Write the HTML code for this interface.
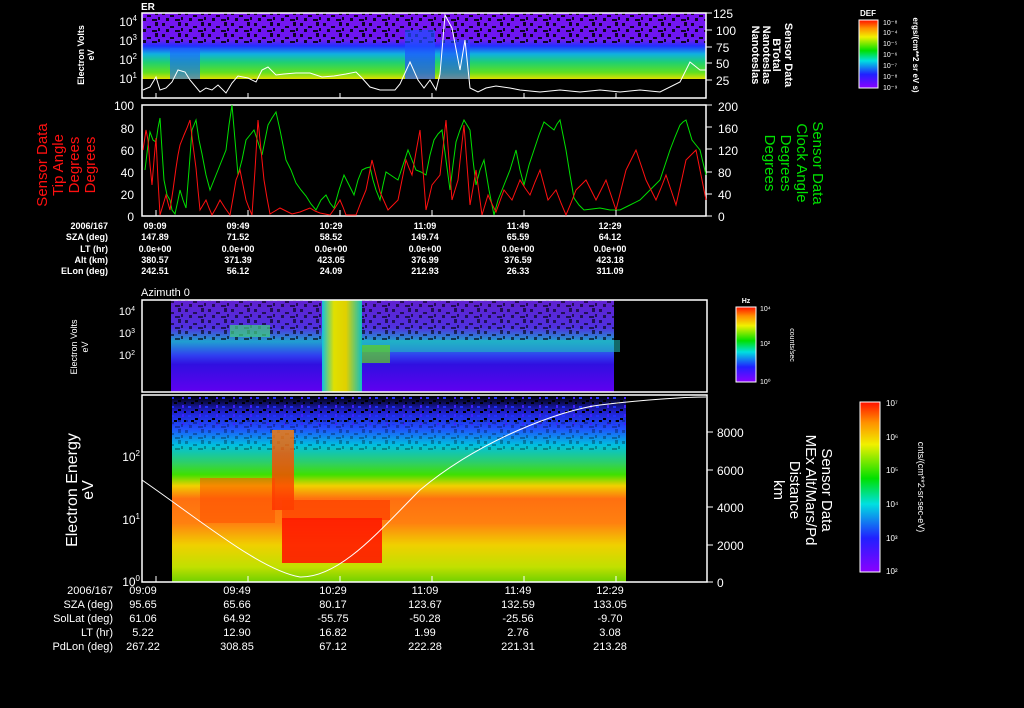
<!DOCTYPE html>
<html><head><meta charset="utf-8"><style>
html,body{margin:0;padding:0;background:#000;}
body{width:1024px;height:708px;position:relative;overflow:hidden;font-family:"Liberation Sans",sans-serif;color:#fff;}
svg{position:absolute;left:0;top:0}
</style></head><body>
<svg width="1024" height="708" viewBox="0 0 1024 708" font-family="Liberation Sans, sans-serif">
<defs>
<linearGradient id="rb" x1="0" y1="1" x2="0" y2="0">
<stop offset="0" stop-color="#8a00ff"/><stop offset="0.2" stop-color="#2020ff"/><stop offset="0.4" stop-color="#00e0e0"/><stop offset="0.55" stop-color="#00e000"/><stop offset="0.75" stop-color="#f0f000"/><stop offset="0.88" stop-color="#ff9000"/><stop offset="1" stop-color="#ff1000"/>
</linearGradient>
<linearGradient id="p1" x1="0" y1="0" x2="0" y2="1">
<stop offset="0" stop-color="#7a10f0"/><stop offset="0.42" stop-color="#6a20f0"/><stop offset="0.5" stop-color="#2030ff"/><stop offset="0.62" stop-color="#10b0e0"/><stop offset="0.75" stop-color="#20d070"/><stop offset="0.9" stop-color="#60e020"/><stop offset="1" stop-color="#e0e000"/>
</linearGradient>
<linearGradient id="p4" x1="0" y1="0" x2="0" y2="1">
<stop offset="0" stop-color="#000010"/><stop offset="0.08" stop-color="#2020d0"/><stop offset="0.17" stop-color="#2050ff"/><stop offset="0.26" stop-color="#00c0e0"/><stop offset="0.36" stop-color="#30d060"/><stop offset="0.42" stop-color="#40e000"/><stop offset="0.48" stop-color="#f0d000"/><stop offset="0.55" stop-color="#ff7010"/><stop offset="0.68" stop-color="#ff8010"/><stop offset="0.8" stop-color="#f0d000"/><stop offset="0.92" stop-color="#c0e000"/><stop offset="1" stop-color="#70d000"/>
</linearGradient>
<linearGradient id="p3" x1="0" y1="0" x2="0" y2="1">
<stop offset="0" stop-color="#6020d0"/><stop offset="0.3" stop-color="#5030e0"/><stop offset="0.45" stop-color="#20a0d0"/><stop offset="0.6" stop-color="#3040f0"/><stop offset="0.7" stop-color="#3010e0"/><stop offset="1" stop-color="#6000f0"/>
</linearGradient>
<linearGradient id="gb" x1="0" y1="0" x2="1" y2="0">
<stop offset="0" stop-color="#10c0e0"/><stop offset="0.3" stop-color="#e0e000"/><stop offset="0.6" stop-color="#e0d000"/><stop offset="1" stop-color="#10c0c0"/>
</linearGradient>
<linearGradient id="sp" x1="0" y1="0" x2="0" y2="1">
<stop offset="0" stop-color="#ff8000"/><stop offset="0.3" stop-color="#ff5000"/><stop offset="1" stop-color="#ff3000"/>
</linearGradient>
<pattern id="spk" width="23" height="11" patternUnits="userSpaceOnUse">
<rect x="1" y="1" width="3" height="3" fill="#000"/><rect x="9" y="4" width="4" height="2" fill="#000"/><rect x="17" y="0" width="3" height="4" fill="#000"/><rect x="5" y="7" width="3" height="3" fill="#000"/><rect x="14" y="8" width="5" height="2" fill="#000"/><rect x="20" y="6" width="2" height="3" fill="#000"/>
</pattern>
<pattern id="spkb" width="17" height="9" patternUnits="userSpaceOnUse">
<rect x="1" y="1" width="3" height="2" fill="#2030ff"/><rect x="8" y="4" width="3" height="2" fill="#000"/><rect x="12" y="0" width="2" height="3" fill="#4020ff"/><rect x="4" y="6" width="3" height="2" fill="#000"/><rect x="14" y="6" width="2" height="2" fill="#000"/>
</pattern>
</defs>

<!-- Panel 1 -->
<rect x="142" y="13" width="564" height="66" fill="url(#p1)"/>
<rect x="142" y="30" width="564" height="8" fill="#7010f0" opacity="0.6"/>
<rect x="142" y="13" width="564" height="30" fill="url(#spk)" opacity="0.85"/>
<rect x="170" y="48" width="30" height="31" fill="#2060ff" opacity="0.6"/>
<rect x="405" y="30" width="30" height="49" fill="#2050ff" opacity="0.7"/>
<rect x="440" y="40" width="30" height="39" fill="#2050ff" opacity="0.6"/>
<rect x="142" y="13" width="564" height="85" fill="none" stroke="#fff" stroke-width="1.5"/>
<polyline fill="none" stroke="#fff" stroke-width="1" points="143,90 150,87 156,77 160,90 166,88 172,82 178,70 185,72 190,80 200,92 206,88 212,90 218,85 226,93 232,83 238,76 248,78 256,82 262,70 268,67 276,75 284,74 296,73 310,73 322,77 334,76 346,74 356,72 362,78 370,87 380,90 395,90 400,84 410,62 418,80 424,88 430,80 436,90 440,74 445,15 452,28 460,70 465,40 470,88 478,92 486,88 496,86 510,88 520,90 540,92 560,90 580,92 600,90 620,92 640,90 660,92 680,82 690,62 700,70 706,70"/>
<text x="141" y="10" font-size="10" font-weight="bold" fill="#fff">ER</text>

<!-- Panel 2 -->
<rect x="142" y="105" width="564" height="111" fill="none" stroke="#fff" stroke-width="1.5"/>
<polyline fill="none" stroke="#00e000" stroke-width="1" points="145,170 148,145 150,132 153,140 156,142 158,128 160,118 162,150 164,180 167,195 170,200 172,210 175,214 178,200 180,190 183,200 186,208 189,170 192,130 196,120 199,140 202,154 206,175 210,190 214,180 218,170 222,160 226,150 229,125 232,105 235,140 238,175 242,160 246,140 250,135 254,130 258,142 262,155 265,140 268,125 272,118 276,112 280,130 286,160 291,170 296,183 301,190 306,196 311,204 316,210 321,200 326,195 330,203 334,208 339,190 344,175 349,185 354,195 358,180 362,170 366,168 370,167 373,180 376,190 380,200 383,185 386,172 392,176 398,180 403,165 408,150 412,160 416,170 421,172 426,175 430,155 434,140 438,134 442,130 446,160 450,190 453,165 456,142 460,130 464,120 467,125 470,130 473,160 476,185 480,170 484,160 489,190 494,215 498,200 502,190 506,180 510,170 513,160 516,150 520,170 524,185 529,165 534,150 539,135 544,122 549,126 554,130 557,124 560,120 563,135 566,150 570,175 574,198 579,205 584,210 592,209 600,208 610,210 620,210 630,205 640,200 650,190 660,180 665,165 670,150 675,137 680,125 683,122 686,120 689,130 692,140 696,145 700,150 706,175"/>
<polyline fill="none" stroke="#ff1010" stroke-width="1" points="143,150 146,130 148,140 150,165 152,185 154,160 156,138 158,180 160,215 163,205 166,195 168,203 170,210 173,190 176,168 178,155 180,145 182,140 184,135 187,128 190,120 193,145 196,168 198,190 200,210 203,205 206,200 209,208 212,215 216,208 220,200 225,208 230,215 233,198 236,180 238,175 240,170 243,185 246,200 249,208 252,215 255,170 258,120 261,150 264,180 267,198 270,214 275,211 280,208 286,211 292,214 296,213 300,212 305,210 310,208 315,211 320,213 325,214 330,215 335,208 340,200 343,207 346,215 351,215 356,215 361,202 366,190 369,175 372,160 376,176 380,192 384,201 388,210 393,205 398,200 402,180 406,160 409,168 412,175 416,152 420,130 423,170 426,210 429,198 432,185 436,180 440,175 443,148 446,120 449,160 452,200 455,190 458,180 461,152 464,125 467,165 470,205 473,188 476,170 479,193 482,215 485,205 488,195 492,204 496,212 500,201 504,190 508,195 512,200 516,190 520,180 525,188 530,195 535,182 540,170 544,185 548,200 552,195 556,190 561,203 566,215 571,203 576,190 581,185 586,180 591,190 596,200 601,190 606,180 611,195 616,210 621,190 626,170 631,160 636,150 641,165 646,180 651,190 656,200 661,188 666,175 671,190 676,205 681,183 686,160 691,155 696,150 701,175 706,200"/>

<!-- Panel 3 -->
<rect x="171" y="300" width="443" height="92" fill="url(#p3)"/>
<rect x="171" y="300" width="443" height="40" fill="url(#spk)" opacity="0.6"/>
<rect x="230" y="325" width="40" height="12" fill="#40d080" opacity="0.7"/>
<rect x="360" y="340" width="260" height="12" fill="#20c0c0" opacity="0.55"/>
<rect x="360" y="345" width="30" height="18" fill="#60d020" opacity="0.7"/>
<rect x="322" y="300" width="40" height="92" fill="url(#gb)"/>
<rect x="142" y="300" width="565" height="92" fill="none" stroke="#fff" stroke-width="1.5"/>
<text x="141" y="296" font-size="11" fill="#fff">Azimuth 0</text>

<!-- Panel 4 -->
<rect x="172" y="397" width="454" height="185" fill="url(#p4)"/>
<rect x="172" y="397" width="454" height="28" fill="url(#spkb)"/>
<rect x="172" y="420" width="454" height="30" fill="url(#spk)" opacity="0.3"/>
<rect x="200" y="478" width="75" height="45" fill="#ff5000" opacity="0.55"/>
<rect x="272" y="430" width="22" height="80" fill="url(#sp)" opacity="0.8"/>
<rect x="282" y="500" width="108" height="20" fill="#ff4000" opacity="0.75"/>
<rect x="282" y="518" width="100" height="45" fill="#ff1a00" opacity="0.9"/>
<rect x="142" y="395" width="565" height="187" fill="none" stroke="#fff" stroke-width="1.5"/>
<path fill="none" stroke="#fff" stroke-width="1" d="M142,480 C200,520 260,570 300,577 C340,578 380,530 420,490 C480,440 560,410 600,405 C650,399 690,397 706,397"/>

<!-- ticks -->
<g stroke="#fff" stroke-width="1">
<line x1="156" y1="98" x2="156" y2="93"/><line x1="248" y1="98" x2="248" y2="93"/><line x1="340" y1="98" x2="340" y2="93"/><line x1="432" y1="98" x2="432" y2="93"/><line x1="524" y1="98" x2="524" y2="93"/><line x1="616" y1="98" x2="616" y2="93"/>
<line x1="156" y1="216" x2="156" y2="210"/><line x1="248" y1="216" x2="248" y2="210"/><line x1="340" y1="216" x2="340" y2="210"/><line x1="432" y1="216" x2="432" y2="210"/><line x1="524" y1="216" x2="524" y2="210"/><line x1="616" y1="216" x2="616" y2="210"/>
<line x1="156" y1="582" x2="156" y2="576"/><line x1="248" y1="582" x2="248" y2="576"/><line x1="340" y1="582" x2="340" y2="576"/><line x1="432" y1="582" x2="432" y2="576"/><line x1="524" y1="582" x2="524" y2="576"/><line x1="616" y1="582" x2="616" y2="576"/>
<line x1="706" y1="13" x2="712" y2="13"/><line x1="706" y1="30" x2="712" y2="30"/><line x1="706" y1="47" x2="712" y2="47"/><line x1="706" y1="63" x2="712" y2="63"/><line x1="706" y1="80" x2="712" y2="80"/>
<line x1="706" y1="105" x2="712" y2="105"/><line x1="706" y1="127" x2="712" y2="127"/><line x1="706" y1="149" x2="712" y2="149"/><line x1="706" y1="172" x2="712" y2="172"/><line x1="706" y1="194" x2="712" y2="194"/><line x1="706" y1="216" x2="712" y2="216"/>
<line x1="707" y1="432" x2="713" y2="432"/><line x1="707" y1="470" x2="713" y2="470"/><line x1="707" y1="507" x2="713" y2="507"/><line x1="707" y1="545" x2="713" y2="545"/><line x1="707" y1="582" x2="713" y2="582"/>
</g>

<g font-size="12" fill="#fff">
<text x="137" y="26" text-anchor="end">10<tspan font-size="8" dy="-5">4</tspan></text>
<text x="137" y="45" text-anchor="end">10<tspan font-size="8" dy="-5">3</tspan></text>
<text x="137" y="64" text-anchor="end">10<tspan font-size="8" dy="-5">2</tspan></text>
<text x="137" y="83" text-anchor="end">10<tspan font-size="8" dy="-5">1</tspan></text>
<text x="713" y="18">125</text><text x="716" y="35">100</text><text x="716" y="52">75</text><text x="716" y="68">50</text><text x="716" y="85">25</text>
<text x="134" y="110" text-anchor="end">100</text><text x="134" y="133" text-anchor="end">80</text><text x="134" y="155" text-anchor="end">60</text><text x="134" y="177" text-anchor="end">40</text><text x="134" y="199" text-anchor="end">20</text><text x="134" y="221" text-anchor="end">0</text>
<text x="718" y="111">200</text><text x="718" y="133">160</text><text x="718" y="155">120</text><text x="718" y="177">80</text><text x="718" y="199">40</text><text x="718" y="221">0</text>
<text x="140" y="461" text-anchor="end">10<tspan font-size="8" dy="-5">2</tspan></text>
<text x="140" y="524" text-anchor="end">10<tspan font-size="8" dy="-5">1</tspan></text>
<text x="140" y="586" text-anchor="end">10<tspan font-size="8" dy="-5">0</tspan></text>
<text x="717" y="437">8000</text><text x="717" y="475">6000</text><text x="717" y="512">4000</text><text x="717" y="550">2000</text><text x="717" y="587">0</text>
</g>
<g font-size="11" fill="#fff">
<text x="135" y="315" text-anchor="end">10<tspan font-size="7" dy="-4">4</tspan></text>
<text x="135" y="337" text-anchor="end">10<tspan font-size="7" dy="-4">3</tspan></text>
<text x="135" y="359" text-anchor="end">10<tspan font-size="7" dy="-4">2</tspan></text>
</g>

<!-- axis titles -->
<text transform="translate(84,55) rotate(-90)" font-size="9" font-weight="bold" text-anchor="middle" fill="#fff">Electron Volts</text>
<text transform="translate(94,55) rotate(-90)" font-size="9" font-weight="bold" text-anchor="middle" fill="#fff">eV</text>
<g fill="#ff1010" font-size="15" text-anchor="middle">
<text transform="translate(47,165) rotate(-90)">Sensor Data</text>
<text transform="translate(63,165) rotate(-90)">Tip Angle</text>
<text transform="translate(79,165) rotate(-90)">Degrees</text>
<text transform="translate(95,165) rotate(-90)">Degrees</text>
</g>
<g fill="#00e000" font-size="15" text-anchor="middle">
<text transform="translate(813,163) rotate(90)">Sensor Data</text>
<text transform="translate(797,163) rotate(90)">Clock Angle</text>
<text transform="translate(781,163) rotate(90)">Degrees</text>
<text transform="translate(765,163) rotate(90)">Degrees</text>
</g>
<g fill="#fff" font-size="11" font-weight="bold" text-anchor="middle">
<text transform="translate(785,55) rotate(90)">Sensor Data</text>
<text transform="translate(773,55) rotate(90)">BTotal</text>
<text transform="translate(763,55) rotate(90)">Nanoteslas</text>
<text transform="translate(752,55) rotate(90)">Nanoteslas</text>
</g>
<text transform="translate(77,347) rotate(-90)" font-size="9" text-anchor="middle" fill="#fff">Electron Volts</text>
<text transform="translate(88,347) rotate(-90)" font-size="9" text-anchor="middle" fill="#fff">eV</text>
<text transform="translate(77,490) rotate(-90)" font-size="16" text-anchor="middle" fill="#fff">Electron Energy</text>
<text transform="translate(93,490) rotate(-90)" font-size="16" text-anchor="middle" fill="#fff">eV</text>
<g fill="#fff" font-size="15" text-anchor="middle">
<text transform="translate(822,490) rotate(90)">Sensor Data</text>
<text transform="translate(806,490) rotate(90)">MEx Alt/Mars/Pd</text>
<text transform="translate(790,490) rotate(90)">Distance</text>
<text transform="translate(774,490) rotate(90)">km</text>
</g>

<!-- colorbars -->
<rect x="859" y="20" width="19" height="68" fill="url(#rb)" stroke="#fff" stroke-width="1"/>
<text x="868" y="16" font-size="8" font-weight="bold" text-anchor="middle" fill="#fff">DEF</text>
<g font-size="7" fill="#fff"><text x="883" y="25">10⁻⁸</text><text x="883" y="35">10⁻⁴</text><text x="883" y="46">10⁻⁵</text><text x="883" y="57">10⁻⁶</text><text x="883" y="68">10⁻⁷</text><text x="883" y="79">10⁻⁸</text><text x="883" y="90">10⁻⁹</text></g>
<text transform="translate(913,55) rotate(90)" font-size="8" font-weight="bold" text-anchor="middle" fill="#fff">ergs/(cm**2 sr eV s)</text>

<rect x="736" y="307" width="20" height="75" fill="url(#rb)" stroke="#fff" stroke-width="1"/>
<text x="746" y="303" font-size="7" font-weight="bold" text-anchor="middle" fill="#fff">Hz</text>
<g font-size="7" fill="#fff"><text x="760" y="311">10⁴</text><text x="760" y="346">10²</text><text x="760" y="384">10⁰</text></g>
<text transform="translate(790,345) rotate(90)" font-size="7" text-anchor="middle" fill="#fff">counts/sec</text>

<rect x="860" y="402" width="20" height="170" fill="url(#rb)" stroke="#fff" stroke-width="1"/>
<g font-size="8" fill="#fff"><text x="886" y="406">10⁷</text><text x="886" y="440">10⁶</text><text x="886" y="473">10⁵</text><text x="886" y="507">10⁴</text><text x="886" y="541">10³</text><text x="886" y="574">10²</text></g>
<text transform="translate(918,487) rotate(90)" font-size="9" text-anchor="middle" fill="#fff">cnts/(cm**2-sr-sec-eV)</text>
</svg>

<div style="position:absolute;left:0;top:221px;font-size:9px;line-height:11.3px;font-weight:bold">
<div style="position:absolute;left:0;width:108px;text-align:right">2006/167<br>SZA (deg)<br>LT (hr)<br>Alt (km)<br>ELon (deg)</div>
<div style="position:absolute;left:125px;width:60px;text-align:center">09:09<br>147.89<br>0.0e+00<br>380.57<br>242.51</div>
<div style="position:absolute;left:208px;width:60px;text-align:center">09:49<br>71.52<br>0.0e+00<br>371.39<br>56.12</div>
<div style="position:absolute;left:301px;width:60px;text-align:center">10:29<br>58.52<br>0.0e+00<br>423.05<br>24.09</div>
<div style="position:absolute;left:395px;width:60px;text-align:center">11:09<br>149.74<br>0.0e+00<br>376.99<br>212.93</div>
<div style="position:absolute;left:488px;width:60px;text-align:center">11:49<br>65.59<br>0.0e+00<br>376.59<br>26.33</div>
<div style="position:absolute;left:580px;width:60px;text-align:center">12:29<br>64.12<br>0.0e+00<br>423.18<br>311.09</div>
</div>

<div style="position:absolute;left:0;top:584px;font-size:11px;line-height:14px">
<div style="position:absolute;left:0;width:113px;text-align:right">2006/167<br>SZA (deg)<br>SolLat (deg)<br>LT (hr)<br>PdLon (deg)</div>
<div style="position:absolute;left:113px;width:60px;text-align:center">09:09<br>95.65<br>61.06<br>5.22<br>267.22</div>
<div style="position:absolute;left:207px;width:60px;text-align:center">09:49<br>65.66<br>64.92<br>12.90<br>308.85</div>
<div style="position:absolute;left:303px;width:60px;text-align:center">10:29<br>80.17<br>-55.75<br>16.82<br>67.12</div>
<div style="position:absolute;left:395px;width:60px;text-align:center">11:09<br>123.67<br>-50.28<br>1.99<br>222.28</div>
<div style="position:absolute;left:488px;width:60px;text-align:center">11:49<br>132.59<br>-25.56<br>2.76<br>221.31</div>
<div style="position:absolute;left:580px;width:60px;text-align:center">12:29<br>133.05<br>-9.70<br>3.08<br>213.28</div>
</div>
</body></html>
